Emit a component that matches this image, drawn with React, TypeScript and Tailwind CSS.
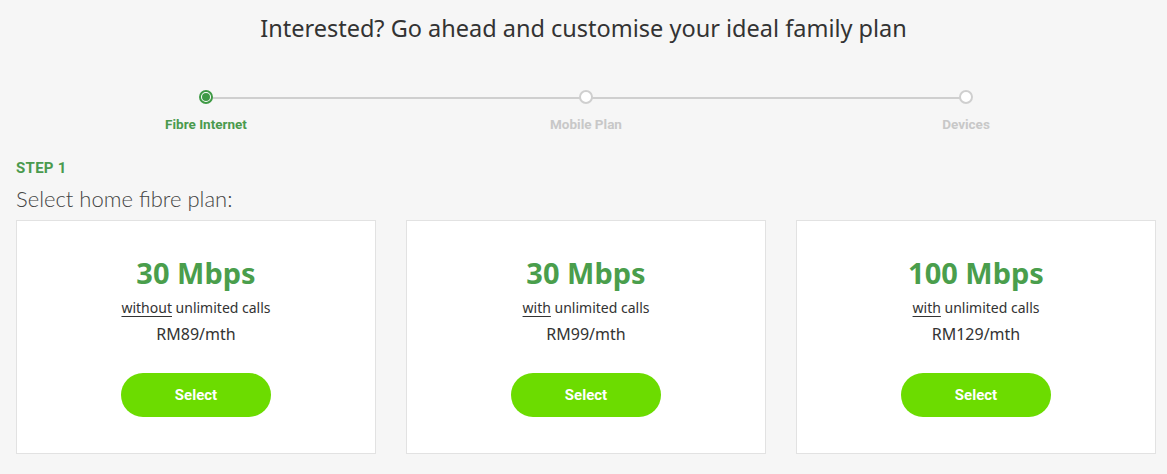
import React from "react";

const plans = [
  { speed: "30 Mbps", kw: "without", price: "RM89/mth" },
  { speed: "30 Mbps", kw: "with", price: "RM99/mth" },
  { speed: "100 Mbps", kw: "with", price: "RM129/mth" },
];

const steps = ["Fibre Internet", "Mobile Plan", "Devices"];

export default function App() {
  return (
    <div className="w-[1167px] h-[474px] bg-[#f6f6f6] overflow-hidden" style={{ fontFamily: "'Noto Sans', sans-serif" }}>
      <h1 className="pt-[13px] text-center text-[23.5px] leading-[30px] text-[#333]" style={{ fontFamily: "'Noto Sans', sans-serif" }}>
        Interested? Go ahead and customise your ideal family plan
      </h1>

      <div className="mx-[16px] w-[1140px]">
        {/* stepper */}
        <div className="relative mt-[47px] grid grid-cols-3">
          <div className="absolute left-[190px] right-[190px] top-[7px] h-[2px] bg-[#cfcfcf]" />
          {steps.map((s, i) => (
            <div key={s} className="relative flex flex-col items-center">
              {i === 0 ? (
                <div className="w-[14px] h-[14px] rounded-full border-2 border-[#3f9a45] bg-white flex items-center justify-center">
                  <div className="w-[8px] h-[8px] rounded-full bg-[#3f9a45]" />
                </div>
              ) : (
                <div className="w-[14px] h-[14px] rounded-full border-2 border-[#cfcfcf] bg-white" />
              )}
              <div
                className={`mt-[12px] text-[13.5px] leading-[16px] font-bold ${i === 0 ? "text-[#4a9a4e]" : "text-[#c8c8c8]"}`}
                style={{ fontFamily: "Roboto, sans-serif" }}
              >
                {s}
              </div>
            </div>
          ))}
        </div>

        <div className="mt-[27px] text-[15px] leading-[18px] font-bold text-[#4a9a4e] tracking-[0.3px]" style={{ fontFamily: "Roboto, sans-serif" }}>
          STEP 1
        </div>
        <div className="mt-[9px] text-[22px] leading-[26px] font-light text-[#444]" style={{ fontFamily: "Lato, sans-serif" }}>
          Select home fibre plan:
        </div>

        <div className="mt-[8px] grid grid-cols-3 gap-[30px]">
          {plans.map((p, i) => (
            <div key={i} className="h-[234px] bg-white border border-[#e2e2e2] flex flex-col items-center pt-[34px]">
              <div className="text-[29px] leading-[36px] font-bold text-[#4a9e4c]">{p.speed}</div>
              <div className="mt-[6px] text-[14px] leading-[22px] text-[#333]">
                <span className="underline underline-offset-[3px]">{p.kw}</span> unlimited calls
              </div>
              <div className="mt-[4px] text-[16px] leading-[22px] text-[#333]">{p.price}</div>
              <button
                className="mt-[28px] w-[150px] h-[44px] rounded-full bg-[#6cdc00] text-white text-[15px] font-bold"
                style={{ fontFamily: "Roboto, sans-serif" }}
              >
                Select
              </button>
            </div>
          ))}
        </div>
      </div>
    </div>
  );
}
